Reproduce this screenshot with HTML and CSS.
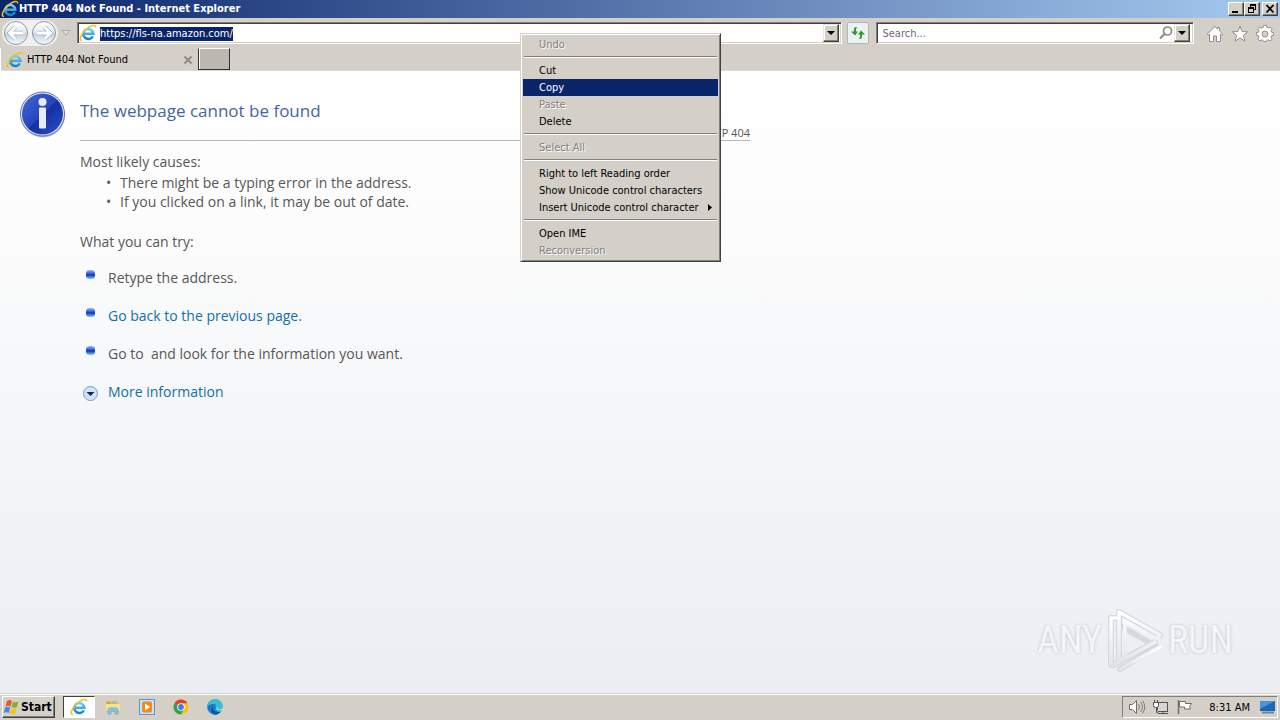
FILE: index.html
```html
<!DOCTYPE html>
<html lang="en">
<head>
<meta charset="utf-8">
<title>HTTP 404 Not Found</title>
<link rel="stylesheet" href="styles.css">
</head>
<body>
<svg class="defs" width="0" height="0" aria-hidden="true">
  <defs>
    <linearGradient id="ieBlue" x1="0" y1="0" x2="0" y2="1"><stop offset="0" stop-color="#6fd0f7"/><stop offset="1" stop-color="#1583d0"/></linearGradient>
    <linearGradient id="ball" x1="0" y1="0" x2="0" y2="1"><stop offset="0" stop-color="#ffffff"/><stop offset=".45" stop-color="#e4edf4"/><stop offset=".55" stop-color="#c5d4e0"/><stop offset="1" stop-color="#f4faff"/></linearGradient>
    <linearGradient id="info" x1="0" y1="0" x2="1" y2="1"><stop offset="0" stop-color="#4468d2"/><stop offset=".5" stop-color="#2444bd"/><stop offset=".52" stop-color="#1430a0"/><stop offset="1" stop-color="#2c50cc"/></linearGradient>
    <linearGradient id="bead" x1="0" y1="0" x2="0" y2="1"><stop offset="0" stop-color="#9bb9f4"/><stop offset=".35" stop-color="#3f6ae0"/><stop offset=".55" stop-color="#1233b4"/><stop offset="1" stop-color="#7ed2ff"/></linearGradient>
    <linearGradient id="edge" x1="0" y1="0" x2="1" y2="1"><stop offset="0" stop-color="#1c5fb8"/><stop offset=".6" stop-color="#1390d8"/><stop offset="1" stop-color="#54d08a"/></linearGradient>
    <linearGradient id="mark" x1="0" y1="0" x2="0" y2="1"><stop offset="0" stop-color="#ffffff"/><stop offset="1" stop-color="#e2e4e8"/></linearGradient>
    <symbol id="ie" viewBox="0 0 18 18">
      <path d="M13.800 12.200A5 5 0 1 1 14.300 9.700H5.200" fill="none" stroke="url(#ieBlue)" stroke-width="2.600"/>
      <path d="M3 16.400C-.4 16.500 1.600 10.500 6 6.200 10.500 1.700 16.800-.4 16.700 3.500" fill="none" stroke="#f3c11d" stroke-width="1.500"/>
    </symbol>
  </defs>
</svg>

<div class="desktop">
  <header class="titlebar">
    <svg class="icon18" aria-hidden="true"><use href="#ie"/></svg>
    <h1 class="window-title">HTTP 404 Not Found - Internet Explorer</h1>
    <div class="window-buttons">
      <button class="wbtn" aria-label="Minimize"><svg width="12" height="10" viewBox="0 0 12 10"><path d="M2 7h6v2H2z"/></svg></button>
      <button class="wbtn" aria-label="Restore"><svg width="12" height="10" viewBox="0 0 12 10"><path d="M4 0h6v6H8V5h1V2H5v1H4zM2 3h6v6H2zm1 2v3h4V5z" fill-rule="evenodd"/></svg></button>
      <button class="wbtn wclose" aria-label="Close"><svg width="12" height="10" viewBox="0 0 12 10"><path d="M2.500 1l7 7.500M9.500 1l-7 7.500" stroke="#000" stroke-width="1.800"/></svg></button>
    </div>
  </header>

  <nav class="navbar" aria-label="Browser">
    <div class="travel">
      <button class="plain" aria-label="Back"><svg width="26" height="26" viewBox="0 0 26 26"><circle cx="13" cy="13" r="11.500" fill="url(#ball)" stroke="#9096a0"/><path d="M12.500 7L6.500 13l6 6M7 13h13" fill="none" stroke="#a7b9c8" stroke-width="4.500"/><path d="M12.500 7L6.500 13l6 6M7 13h13" fill="none" stroke="#fff" stroke-width="2.800"/></svg></button>
      <button class="plain" aria-label="Forward"><svg width="26" height="26" viewBox="0 0 26 26"><circle cx="13" cy="13" r="11.500" fill="url(#ball)" stroke="#9096a0"/><path d="M13.500 7l6 6-6 6M19 13H6" fill="none" stroke="#a7b9c8" stroke-width="4.500"/><path d="M13.500 7l6 6-6 6M19 13H6" fill="none" stroke="#fff" stroke-width="2.800"/></svg></button>
    </div>
    <button class="plain recent" aria-label="Recent pages"><svg width="10" height="6" viewBox="0 0 10 6"><path d="M1 .5h8L5 5z" fill="#e2ded8" stroke="#aaa69f"/></svg></button>
    <div class="field address">
      <svg class="icon18" aria-hidden="true"><use href="#ie"/></svg>
      <div class="url" role="textbox" tabindex="0" aria-label="Address"><span class="selected">https://fls-na.amazon.com/</span></div>
      <button class="drop" aria-label="Show address list"><svg width="8" height="4" viewBox="0 0 8 4"><path d="M0 0h8L4 4z"/></svg></button>
    </div>
    <button class="refresh" aria-label="Refresh"><svg width="16" height="16" viewBox="0 0 16 16"><path d="M7 2C4.500 1.500 3.500 3.500 4 6.500H1l4 4 3-4H6c0-2 0-3 1-4.500zM9 14c2.500.5 3.500-1.500 3-4.500h3l-4-4-3 4h2c0 2 0 3-1 4.500z" fill="#2d9a2d"/></svg></button>
    <div class="field search">
      <input class="search-input" type="text" placeholder="Search..." aria-label="Search">
      <button class="plain" aria-label="Go"><svg width="16" height="16" viewBox="0 0 16 16"><circle cx="9.500" cy="6" r="4" fill="none" stroke="#8a8a8a" stroke-width="1.700"/><path d="M6.500 9L2 13.500" stroke="#8a8a8a" stroke-width="2.200"/></svg></button>
      <button class="drop" aria-label="Search options"><svg width="8" height="4" viewBox="0 0 8 4"><path d="M0 0h8L4 4z"/></svg></button>
    </div>
    <div class="tools">
      <button class="plain" aria-label="Home"><svg width="18" height="18" viewBox="0 0 18 18"><path d="M9 2.500l2.500 2.400V3.500h2v3.300L16.800 10l-1 1.200-1.300-1V17.500h-4V12h-3v5.500h-4V10.200l-1.300 1L1.200 10z" fill="#fff" stroke="#918d88"/></svg></button>
      <button class="plain" aria-label="Favorites"><svg width="18" height="18" viewBox="0 0 18 18"><path d="M9 2.200l2.100 5.300 5.700.3-4.400 3.600 1.500 5.700L9 13.900l-4.900 3.200 1.500-5.700L1.200 7.800l5.700-.3z" fill="#fff" stroke="#918d88"/></svg></button>
      <button class="plain" aria-label="Tools"><svg width="18" height="18" viewBox="0 0 18 18"><path d="M7.500 1.500h3l.4 2 1.500.7 1.800-1.200 2 2-1.200 1.800.6 1.500 2 .4v2.600l-2 .4-.6 1.500 1.200 1.800-2 2-1.800-1.200-1.500.7-.4 1h-3l-.4-1-1.500-.7-1.800 1.200-2-2L3 13.200l-.6-1.500-2-.4V8.700l2-.4L3 6.800 1.800 5l2-2 1.800 1.200 1.500-.7z" fill="#fff" stroke="#918d88"/><circle cx="9" cy="10" r="3" fill="#d4d0c8" stroke="#918d88"/></svg></button>
    </div>
  </nav>

  <div class="tabs">
    <div class="tab">
      <svg class="icon18" aria-hidden="true"><use href="#ie"/></svg>
      <span class="tab-label">HTTP 404 Not Found</span>
      <button class="plain" aria-label="Close tab"><svg width="10" height="10" viewBox="0 0 10 10"><path d="M1.500 1.500l7 7M8.500 1.500l-7 7" stroke="#8c8884" stroke-width="1.800"/></svg></button>
    </div>
    <button class="newtab" aria-label="New tab"></button>
  </div>

  <main class="page">
    <div class="error">
      <svg class="info" width="48" height="48" viewBox="0 0 48 48" aria-hidden="true"><circle cx="25" cy="25.500" r="22" fill="#b5b8c2"/><circle cx="24.500" cy="24" r="22" fill="#e9edf7" stroke="#5b6fb2"/><circle cx="24.500" cy="24" r="20.500" fill="url(#info)"/><circle cx="24.500" cy="12" r="4" fill="#e9ebf2"/><rect x="21" y="17.500" width="7" height="21" rx="1" fill="#e9ebf2"/></svg>
      <div class="content">
        <div class="head">
          <h2 class="headline">The webpage cannot be found</h2>
          <span class="code">HTTP 404</span>
        </div>
        <p class="lead">Most likely causes:</p>
        <ul class="causes">
          <li>There might be a typing error in the address.</li>
          <li>If you clicked on a link, it may be out of date.</li>
        </ul>
        <p class="lead try">What you can try:</p>
        <ul class="actions">
          <li><svg width="20" height="20" viewBox="0 0 20 20"><rect x="6" y="2" width="9" height="9" rx="3.500" fill="url(#bead)"/></svg><span>Retype the address.</span></li>
          <li><svg width="20" height="20" viewBox="0 0 20 20"><rect x="6" y="2" width="9" height="9" rx="3.500" fill="url(#bead)"/></svg><a href="#">Go back to the previous page.</a></li>
          <li><svg width="20" height="20" viewBox="0 0 20 20"><rect x="6" y="2" width="9" height="9" rx="3.500" fill="url(#bead)"/></svg><span>Go to&nbsp; and look for the information you want.</span></li>
          <li><svg width="20" height="20" viewBox="0 0 20 20"><circle cx="10.500" cy="11.500" r="7" fill="#cfe3f8" stroke="#7d9cc4"/><path d="M6.500 10h8l-4 4z" fill="#0a246a"/></svg><a href="#">More information</a></li>
        </ul>
      </div>
    </div>
    <div class="watermark">
      <span>ANY</span>
      <svg width="60" height="66" viewBox="0 0 60 66" aria-hidden="true"><g fill="none" stroke-linejoin="round" stroke-linecap="round"><g stroke="#d5d9df" stroke-width="6"><path d="M11 11H6V56Q6 60 10 57L50 35"/><path d="M14 53V5L55 28"/><path d="M14 18L52 40 15 62"/></g><g stroke="url(#mark)" stroke-width="3.500"><path d="M11 11H6V56Q6 60 10 57L50 35"/><path d="M20 51L14 53V5L55 28 51 32 20 14V51"/><path d="M55 40L15 62"/></g></g></svg>
      <span>RUN</span>
    </div>
  </main>

  <footer class="taskbar">
    <button class="start"><svg width="18" height="16" viewBox="0 0 18 16" aria-hidden="true"><path d="M4 2c2-1.500 3.500-1 5 0L7.500 7.500C6 6.500 4.500 6.300 2.500 7.500z" fill="#ee5526"/><path d="M10 2.500c2 1.200 3.500 1 5.500 0L14 8c-2 1.200-3.500 1-5.500 0z" fill="#79b52e"/><path d="M2.200 8.500c2-1.200 3.500-1 5 0L5.700 14c-1.500-1-3-1.200-5 0z" fill="#3f8ede"/><path d="M8.200 9c2 1.200 3.500 1 5.500 0l-1.500 5.500c-2 1.200-3.500 1-5.500 0z" fill="#fbc024"/></svg>Start</button>
    <div class="launch">
      <button class="task active" aria-label="Internet Explorer"><svg class="icon18"><use href="#ie"/></svg></button>
      <button class="task" aria-label="Explorer"><svg width="18" height="18" viewBox="0 0 18 18"><path d="M2 3h5l1 2h7v9H2z" fill="#e0b850"/><path d="M2 6h14v7H2z" fill="#f6e28c"/><path d="M3 5h3M8 4h5" stroke="#6bb36c"/><path d="M4 16v-4q0-2 2-2h6q2 0 2 2v4h-3v-3H7v3z" fill="#8cc7e8" stroke="#5d9fc8" stroke-width=".7"/></svg></button>
      <button class="task" aria-label="Media Player"><svg width="18" height="18" viewBox="0 0 18 18"><rect x="1.500" y="1.500" width="15" height="15" fill="#c6e2f6" stroke="#5a9ac8"/><rect x="4" y="3.500" width="10" height="11" rx="2" fill="#f08a1c"/><path d="M7 5.500v7L12 9z" fill="#fff"/></svg></button>
      <button class="task" aria-label="Chrome"><svg width="18" height="18" viewBox="0 0 18 18"><circle cx="9" cy="9" r="7.500" fill="#fbc116"/><path d="M9 9L2.500 5.250A7.500 7.500 0 0 1 15.500 5.250H9z" fill="#e33b2e"/><path d="M9 9L2.500 5.250A7.500 7.500 0 0 0 9 16.500L12 10.800z" fill="#2fa34f"/><circle cx="9" cy="9" r="3.800" fill="#fff"/><circle cx="9" cy="9" r="2.900" fill="#3b7de8"/></svg></button>
      <button class="task" aria-label="Edge"><svg width="18" height="18" viewBox="0 0 18 18"><circle cx="9" cy="9" r="7.800" fill="url(#edge)"/><path d="M9 1.200a7.800 7.800 0 0 1 7.800 7c0 3-4 4-6 2.800 1-3-1-5-4-5-2.500 0-4.500 1-5.500 3C1.300 4.500 4.500 1.200 9 1.200z" fill="#38bfd2"/><path d="M7.200 8.300c-1 4 2.500 6.700 7.500 5.400A7.800 7.800 0 0 1 9 16.800C5 16 4 11 7.200 8.300z" fill="#174f9f"/><path d="M9.500 8.500q2 1.500.8 3.200 3 1.500 6.500.3L17.500 16H18V10.500l-1.200-.7c-1 2-4 2-5.500 1.200.8-1 .3-2.500-1.800-2.500z" fill="#d4d0c8"/></svg></button>
    </div>
    <div class="tray">
      <svg width="18" height="16" viewBox="0 0 18 16" role="img" aria-label="Volume"><path d="M1.500 5.500h3l4-4v13l-4-4h-3z" fill="#fff" stroke="#706c68"/><path d="M10.500 5q2 3 0 6M12.500 3q4 5 0 10M14.500 1.500q4.500 6.500 0 13" fill="none" stroke="#807c78"/></svg>
      <svg width="18" height="16" viewBox="0 0 18 16" role="img" aria-label="Network"><rect x="5.500" y="3.500" width="10" height="9" fill="#d8d6d2" stroke="#55524f"/><path d="M6 14.500h10M11 12v3" stroke="#55524f"/><path d="M1.500 3.500h5v3q0 2-2 2h-1q-2 0-2-2zM2.500 1v2M5.500 1v2M4.500 9v4.500H6" fill="#fff" stroke="#55524f"/></svg>
      <svg width="18" height="16" viewBox="0 0 18 16" role="img" aria-label="Action Center"><path d="M2.500 1v14" stroke="#706c68" stroke-width="1.500"/><path d="M3.500 2.500h6v2h6l-2 3 1 2.500H8.500V8h-5z" fill="#fff" stroke="#706c68"/></svg>
      <time class="clock">8:31 AM</time>
      <svg width="18" height="16" viewBox="0 0 18 16" role="img" aria-label="Show desktop"><path d="M1 2h15v10H1z" fill="#1b66b5"/><path d="M1 2h15L1 10z" fill="#4796dc"/><path d="M3 13.500h12" stroke="#5e88aa" stroke-width="2"/></svg>
    </div>
  </footer>

  <div class="menu" role="menu">
    <button role="menuitem" disabled>Undo</button>
    <hr>
    <button role="menuitem">Cut</button>
    <button role="menuitem" class="current">Copy</button>
    <button role="menuitem" disabled>Paste</button>
    <button role="menuitem">Delete</button>
    <hr>
    <button role="menuitem" disabled>Select All</button>
    <hr>
    <button role="menuitem">Right to left Reading order</button>
    <button role="menuitem">Show Unicode control characters</button>
    <button role="menuitem" class="parent">Insert Unicode control character<svg width="4" height="7" viewBox="0 0 4 7"><path d="M0 0l4 3.500L0 7z"/></svg></button>
    <hr>
    <button role="menuitem">Open IME</button>
    <button role="menuitem" disabled>Reconversion</button>
  </div>
</div>
</body>
</html>
```
FILE: styles.css
```css
* { box-sizing: border-box; }
body { margin: 0; font: 11px/17px Tahoma, "DejaVu Sans Condensed", "Noto Sans", sans-serif; color: #000; }
button { font: inherit; color: inherit; border-radius: 0; }
svg { flex: none; display: block; }
.defs { position: absolute; }
.icon18 { width: 18px; height: 18px; }
.desktop { position: relative; min-height: 100vh; display: flex; flex-direction: column; background: #d4d0c8; }
.plain { display: flex; padding: 0; border: 0; background: none; }

.titlebar { height: 18px; display: flex; align-items: center; padding: 0 2px 0 1px; background: linear-gradient(to right, #0a246a, #a6caf0); color: #fff; }
.window-title { flex: 1; margin: 0; font-size: 11px; line-height: 18px; font-weight: bold; }
.window-buttons { display: flex; }
.wbtn { width: 16px; height: 14px; padding: 0; display: flex; align-items: center; justify-content: center; background: #d4d0c8; border: 1px solid; border-color: #fff #404040 #404040 #fff; box-shadow: inset -1px -1px #808080; }
.wclose { margin-left: 2px; }

.navbar { height: 30px; display: flex; align-items: center; padding: 0 6px 0 2px; }
.travel { display: flex; gap: 2px; padding: 0 1px; background: #f1f0ee; border-radius: 13px; }
.recent { margin: 0 6px 0 3px; }
.field { display: flex; align-items: center; height: 22px; background: #fff; border: 1px solid; border-color: #808080 #fff #fff #808080; box-shadow: inset 1px 1px #404040, inset -1px -1px #d4d0c8; padding: 2px; }
.address { flex: 764; padding-left: 1px; }
.url { flex: 1; padding-left: 3px; }
.selected { display: inline-block; line-height: 14px; background: #0a246a; color: #fff; }
.drop { width: 16px; height: 18px; padding: 0; display: flex; align-items: center; justify-content: center; background: #d4d0c8; border: 1px solid; border-color: #e8e6e0 #404040 #404040 #e8e6e0; box-shadow: inset -1px -1px #808080, inset 1px 1px #fff; }
.refresh { width: 22px; height: 22px; margin: 0 7px 0 5px; padding: 2px; background: #edf1f3; border: 1px solid #b5b5b5; border-radius: 2px; }
.search { flex: 312; padding-right: 3px; }
.search-input { flex: 1; min-width: 0; padding: 0 3px; border: 0; outline: 0; background: none; font: inherit; }
.search-input::placeholder { color: #6d6d6d; opacity: 1; }
.tools { display: flex; gap: 7px; margin-left: 12px; }

.tabs { height: 23px; display: flex; align-items: flex-start; border-bottom: 1px solid #dcd9d2; }
.tab { width: 198px; height: 23px; padding: 0 5px; display: flex; align-items: center; gap: 3px; border-left: 1px solid #fff; }
.tab-label { flex: 1; }
.newtab { width: 32px; height: 22px; padding: 0; background: #bcb8b1; border: 1px solid; border-color: #fff #303030 #303030 #303030; box-shadow: inset 1px 0 #fff; }

.page { flex: 1; display: flex; flex-direction: column; justify-content: space-between; background: linear-gradient(#fff, #fcfcfc 25%, #eaeef3); font: 14px/20px "Open Sans", "Noto Sans", sans-serif; color: #575757; }
.error { display: flex; gap: 14px; padding: 19px 20px 0 18px; max-width: 770px; }
.content { flex: 1; }
.head { display: flex; align-items: flex-end; justify-content: space-between; height: 51px; border-bottom: 1px solid #b6b6b6; }
.headline { margin: 0; align-self: flex-start; padding-top: 8px; font-size: 17px; line-height: 26px; font-weight: normal; color: #4465a2; }
.code { font-size: 11px; line-height: 14px; }
.lead { margin: 11px 0 0; }
.causes { margin: 1px 0 0; padding: 0 0 0 40px; line-height: 19px; list-style: none; }
.causes li::before { content: "•"; display: inline-block; width: 14px; margin-left: -14px; }
.try { margin-top: 21px; }
.actions { margin: 16px 0 0; padding: 0; list-style: none; display: flex; flex-direction: column; gap: 18px; }
.actions li { display: flex; gap: 8px; }
a { color: #136fa8; text-decoration: none; }

.watermark { align-self: flex-end; display: flex; align-items: center; gap: 3px; margin: 0 47px 20px 0; font: 38px/60px "Liberation Sans Narrow", "Roboto Condensed", "Liberation Sans", sans-serif; color: #f4f5f7; text-shadow: 0 0 3px #b9bec6; }

.taskbar { height: 27px; display: flex; align-items: center; padding: 2px; border-top: 1px solid #d4d0c8; box-shadow: inset 0 1px #fff; }
.start { height: 22px; padding: 0 2px 0 0; display: flex; align-items: center; font-size: 12px; font-weight: bold; background: #d4d0c8; border: 1px solid; border-color: #fff #404040 #404040 #fff; box-shadow: inset -1px -1px #808080; }
.launch { flex: 1; display: flex; gap: 2px; margin-left: 8px; }
.task { width: 32px; height: 22px; padding: 0; display: flex; align-items: center; justify-content: center; background: none; border: 1px solid transparent; }
.active { background: #fff; border-color: #404040 #fff #fff #404040; }
.tray { height: 22px; display: flex; align-items: center; gap: 6px; padding: 0 0 0 5px; border: 1px solid; border-color: #808080 #fff #fff #808080; }
.clock { margin: 0 3px 0 9px; }

.menu { position: absolute; left: 520px; top: 33px; width: 201px; padding: 2px; display: flex; flex-direction: column; background: #d4d0c8; border: 1px solid; border-color: #d4d0c8 #404040 #404040 #d4d0c8; box-shadow: inset 1px 1px #fff, inset -1px -1px #808080; }
.menu button { height: 17px; padding: 0 6px 0 16px; display: flex; align-items: center; justify-content: space-between; border: 0; background: none; text-align: left; white-space: nowrap; }
.menu button:disabled { color: #808080; text-shadow: 1px 1px #fff; }
.menu .current { background: #0a246a; color: #fff; }
.menu hr { width: calc(100% - 2px); height: 2px; margin: 3px 1px 4px; border: 0; border-top: 1px solid #808080; border-bottom: 1px solid #fff; }
```
